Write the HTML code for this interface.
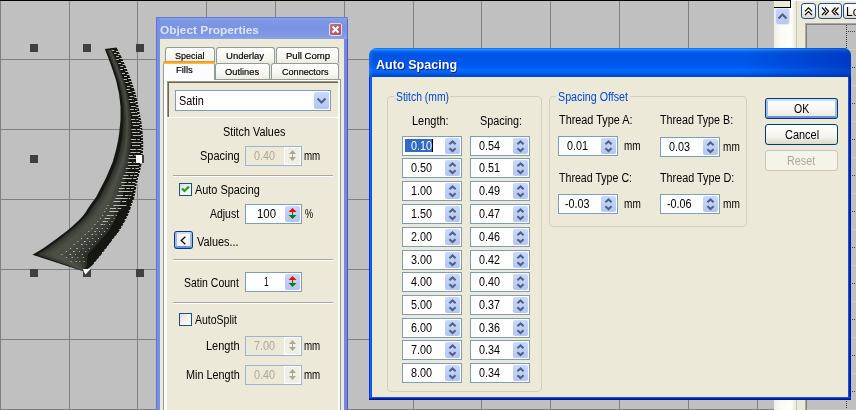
<!DOCTYPE html>
<html><head><meta charset="utf-8"><title>Auto Spacing</title>
<style>
html,body{margin:0;padding:0}
body{width:856px;height:410px;overflow:hidden;position:relative;background:#c0c0c0;font-family:"Liberation Sans",sans-serif;font-size:11px}
.t{position:absolute;white-space:nowrap;transform-origin:0 0}
#canvas,#dock,#panel,#dlg{will-change:transform;position:absolute;left:0;top:0;width:856px;height:410px;overflow:hidden}
</style></head><body>
<div id="canvas">
<div style="position:absolute;left:0px;top:0px;width:1px;height:410px;background:#808080"></div>
<div style="position:absolute;left:69px;top:0px;width:1px;height:410px;background:#808080"></div>
<div style="position:absolute;left:137px;top:0px;width:1px;height:410px;background:#808080"></div>
<div style="position:absolute;left:206px;top:0px;width:1px;height:410px;background:#808080"></div>
<div style="position:absolute;left:275px;top:0px;width:1px;height:410px;background:#808080"></div>
<div style="position:absolute;left:344px;top:0px;width:1px;height:410px;background:#808080"></div>
<div style="position:absolute;left:413px;top:0px;width:1px;height:410px;background:#808080"></div>
<div style="position:absolute;left:481px;top:0px;width:1px;height:410px;background:#808080"></div>
<div style="position:absolute;left:550px;top:0px;width:1px;height:410px;background:#808080"></div>
<div style="position:absolute;left:619px;top:0px;width:1px;height:410px;background:#808080"></div>
<div style="position:absolute;left:688px;top:0px;width:1px;height:410px;background:#808080"></div>
<div style="position:absolute;left:757px;top:0px;width:1px;height:410px;background:#808080"></div>
<div style="position:absolute;left:0px;top:59px;width:774px;height:1px;background:#808080"></div>
<div style="position:absolute;left:0px;top:129px;width:774px;height:1px;background:#808080"></div>
<div style="position:absolute;left:0px;top:199px;width:774px;height:1px;background:#808080"></div>
<div style="position:absolute;left:0px;top:269px;width:774px;height:1px;background:#808080"></div>
<div style="position:absolute;left:0px;top:339px;width:774px;height:1px;background:#808080"></div>
<div style="position:absolute;left:0px;top:409px;width:774px;height:1px;background:#808080"></div>
<div style="position:absolute;left:0px;top:0px;width:791px;height:1px;background:#000"></div>
<svg style="position:absolute;left:0;top:0" width="160" height="290" viewBox="0 0 160 290"><polygon fill="#161713" points="116.5,47.5 117.6,49.5 118.6,51.5 119.7,53.5 120.7,55.5 121.7,57.5 122.6,59.5 123.5,61.5 124.4,63.5 125.3,65.5 126.2,67.5 127.0,69.5 127.8,71.5 128.6,73.5 129.4,75.5 130.2,77.5 131.0,79.5 131.7,81.5 132.3,83.5 133.0,85.5 133.7,87.5 134.3,89.5 135.0,91.5 135.6,93.5 136.1,95.5 136.5,97.5 136.9,99.5 137.4,101.5 137.8,103.5 138.2,105.5 138.6,107.5 139.0,109.5 139.4,111.5 139.8,113.5 140.2,115.5 140.6,117.5 141.0,119.5 141.3,121.5 141.6,123.5 141.8,125.5 142.0,127.5 142.3,129.5 142.5,131.5 142.7,133.5 142.9,135.5 142.9,137.5 143.0,139.5 143.1,141.5 143.2,143.5 143.2,145.5 143.2,147.5 143.1,149.5 143.0,151.5 142.9,153.5 142.7,155.5 142.6,157.5 142.4,159.5 142.0,161.5 141.6,163.5 141.2,165.5 140.8,167.5 140.4,169.5 139.9,171.5 139.3,173.5 138.8,175.5 138.2,177.5 137.6,179.5 137.2,181.5 136.8,183.5 136.5,185.5 136.1,187.5 135.8,189.5 135.5,191.5 135.2,193.5 134.8,195.5 134.4,197.5 133.7,199.5 132.9,201.5 132.2,203.5 131.5,205.5 130.8,207.5 130.2,209.5 129.5,211.5 128.8,213.5 127.9,215.5 126.9,217.5 125.8,219.5 124.8,221.5 123.7,223.5 122.5,225.5 121.4,227.5 120.2,229.5 118.9,231.5 117.3,233.5 115.8,235.5 114.2,237.5 112.6,239.5 111.2,241.5 109.7,243.5 108.2,245.5 106.7,247.5 105.2,249.5 103.6,251.5 102.0,253.5 100.5,255.5 98.9,257.5 97.2,259.5 95.5,261.5 93.9,263.5 92.1,265.5 89.7,267.5 86.9,269.5 84.0,271.5 84,271.5 32.4,254.7 32.4,254.7 35.5,253.0 38.8,251.0 42.1,249.0 45.1,247.0 47.9,245.0 50.7,243.0 53.5,241.0 56.3,239.0 58.9,237.0 61.5,235.0 64.2,233.0 66.8,231.0 69.3,229.0 71.5,227.0 73.7,225.0 75.9,223.0 78.1,221.0 80.1,219.0 81.9,217.0 83.6,215.0 85.1,213.0 86.4,211.0 87.6,209.0 88.9,207.0 90.3,205.0 91.7,203.0 93.2,201.0 94.7,199.0 96.1,197.0 97.2,195.0 98.2,193.0 99.2,191.0 100.3,189.0 101.3,187.0 102.3,185.0 103.4,183.0 104.4,181.0 105.4,179.0 106.3,177.0 107.2,175.0 108.1,173.0 108.9,171.0 109.8,169.0 110.6,167.0 111.4,165.0 112.3,163.0 113.0,161.0 113.5,159.0 114.1,157.0 114.6,155.0 115.2,153.0 115.7,151.0 116.2,149.0 116.7,147.0 117.1,145.0 117.5,143.0 118.0,141.0 118.3,139.0 118.6,137.0 118.9,135.0 119.2,133.0 119.4,131.0 119.6,129.0 119.8,127.0 120.0,125.0 120.2,123.0 120.4,121.0 120.5,119.0 120.5,117.0 120.5,115.0 120.5,113.0 120.5,111.0 120.5,109.0 120.5,107.0 120.3,105.0 120.1,103.0 119.9,101.0 119.6,99.0 119.4,97.0 119.2,95.0 118.9,93.0 118.4,91.0 118.0,89.0 117.5,87.0 117.1,85.0 116.7,83.0 116.2,81.0 115.6,79.0 115.0,77.0 114.3,75.0 113.6,73.0 113.0,71.0 112.3,69.0 111.6,67.0 110.9,65.0 110.2,63.0 109.4,61.0 108.7,59.0 108.0,57.0 107.2,55.0 106.4,53.0 105.6,51.0 104.8,49.0"/><polygon fill="#2e312a" points="107.0,50 107.8,52 108.6,54 109.5,56 110.3,58 111.0,60 111.8,62 112.5,64 113.2,66 113.9,68 114.6,70 115.4,72 116.1,74 116.7,76 117.4,78 118.0,80 118.6,82 119.1,84 119.5,86 120.0,88 120.5,90 121.0,92 121.3,94 121.7,96 121.9,98 122.1,100 122.5,102 122.7,104 122.9,106 123.0,108 123.1,110 123.2,112 123.2,114 123.3,116 123.3,118 123.4,120 123.2,122 123.1,124 123.0,126 122.8,128 122.7,130 122.6,132 122.4,134 122.2,136 121.9,138 121.7,140 121.3,142 120.9,144 120.6,146 120.2,148 119.8,150 119.3,152 118.7,154 118.1,156 117.6,158 117.0,160 116.4,162 115.6,164 114.7,166 113.9,168 113.0,170 112.2,172 111.3,174 110.3,176 109.5,178 108.5,180 107.5,182 106.4,184 105.4,186 104.4,188 103.4,190 102.3,192 101.3,194 100.3,196 99.0,198 97.6,200 96.0,202 94.5,204 93.1,206 91.7,208 90.4,210 89.2,212 87.8,214 86.1,216 84.3,218 82.4,220 80.2,222 78.0,224 75.8,226 73.5,228 71.1,230 68.7,232 66.0,234 63.5,236 61.0,238 58.3,240 55.6,242 52.9,244 50.2,246 47.5,248 44.4,250 41.1,252 37.7,254 40.2,256 45.9,258 51.6,260 57.2,262 62.9,264 68.6,266 74.2,268 79.8,270 84.9,270 85.9,268 86.7,266 87.0,264 87.0,262 87.2,260 87.3,258 87.4,256 88.0,254 90.0,252 91.9,250 93.8,248 95.6,246 97.3,244 99.1,242 100.8,240 102.6,238 104.4,236 106.1,234 107.9,232 109.5,230 110.6,228 111.6,226 112.7,224 113.7,222 114.6,220 115.6,218 116.5,216 117.3,214 117.9,212 118.4,210 118.9,208 119.5,206 120.1,204 120.8,202 121.5,200 122.1,198 122.6,196 122.9,194 123.2,192 123.5,190 123.8,188 124.2,186 124.5,184 124.9,182 125.3,180 125.8,178 126.2,176 126.7,174 127.2,172 127.6,170 128.0,168 128.3,166 128.7,164 129.1,162 129.4,160 129.6,158 129.7,156 129.8,154 130.0,152 130.1,150 130.3,148 130.6,146 130.8,144 131.0,142 131.1,140 131.2,138 131.3,136 131.4,134 131.4,132 131.4,130 131.3,128 131.3,126 131.3,124 131.2,122 131.2,120 131.0,118 130.8,116 130.6,114 130.4,112 130.2,110 130.0,108 129.7,106 129.4,104 129.1,102 128.7,100 128.4,98 128.1,96 127.7,94 127.3,92 126.7,90 126.1,88 125.5,86 125.0,84 124.4,82 123.8,80 123.2,78 122.4,76 121.7,74 120.9,72 120.2,70 119.4,68 118.7,66 117.9,64 117.1,62 116.2,60 115.4,58 114.5,56 113.6,54 112.7,52 111.8,50"/><polygon fill="#393c35" points="107.7,50 108.6,52 109.4,54 110.3,56 111.1,58 111.8,60 112.6,62 113.3,64 114.1,66 114.8,68 115.5,70 116.2,72 117.0,74 117.6,76 118.3,78 119.0,80 119.5,82 120.0,84 120.5,86 121.0,88 121.5,90 122.0,92 122.3,94 122.7,96 122.9,98 123.2,100 123.5,102 123.7,104 124.0,106 124.1,108 124.2,110 124.3,112 124.4,114 124.5,116 124.5,118 124.6,120 124.5,122 124.4,124 124.3,126 124.2,128 124.1,130 124.0,132 123.8,134 123.6,136 123.4,138 123.2,140 122.9,142 122.5,144 122.2,146 121.8,148 121.4,150 120.9,152 120.4,154 119.8,156 119.3,158 118.7,160 118.0,162 117.3,164 116.4,166 115.6,168 114.7,170 113.9,172 113.0,174 112.1,176 111.2,178 110.2,180 109.2,182 108.1,184 107.2,186 106.2,188 105.2,190 104.1,192 103.1,194 102.1,196 100.8,198 99.4,200 97.9,202 96.4,204 95.0,206 93.6,208 92.4,210 91.1,212 89.7,214 88.1,216 86.2,218 84.3,220 82.2,222 80.0,224 77.8,226 75.6,228 73.2,230 70.8,232 68.2,234 65.7,236 63.2,238 60.6,240 58.0,242 55.3,244 52.6,246 50.0,248 46.9,250 43.7,252 40.4,254 42.8,256 48.1,258 53.5,260 58.8,262 64.2,264 69.6,266 74.8,268 80.1,270 84.3,270 84.6,268 84.7,266 84.4,264 83.8,262 83.3,260 82.8,258 82.3,256 82.6,254 84.7,252 86.8,250 88.8,248 90.7,246 92.5,244 94.4,242 96.2,240 98.1,238 99.9,236 101.8,234 103.7,232 105.3,230 106.6,228 107.7,226 108.8,224 110.0,222 111.0,220 112.1,218 113.1,216 113.9,214 114.6,212 115.2,210 115.7,208 116.4,206 117.1,204 117.8,202 118.6,200 119.3,198 119.9,196 120.3,194 120.6,192 121.0,190 121.4,188 121.8,186 122.1,184 122.6,182 123.1,180 123.6,178 124.1,176 124.6,174 125.1,172 125.5,170 126.0,168 126.4,166 126.9,164 127.2,162 127.5,160 127.8,158 127.9,156 128.1,154 128.3,152 128.5,150 128.7,148 129.0,146 129.2,144 129.4,142 129.6,140 129.7,138 129.9,136 130.0,134 130.0,132 130.0,130 130.0,128 130.0,126 130.0,124 130.0,122 130.0,120 129.8,118 129.6,116 129.4,114 129.2,112 129.1,110 128.9,108 128.6,106 128.3,104 128.1,102 127.7,100 127.4,98 127.1,96 126.7,94 126.3,92 125.7,90 125.2,88 124.6,86 124.1,84 123.5,82 122.9,80 122.2,78 121.5,76 120.8,74 120.1,72 119.3,70 118.6,68 117.8,66 117.0,64 116.2,62 115.4,60 114.6,58 113.7,56 112.8,54 111.9,52 111.0,50"/><polygon fill="#43473e" points="108.6,50 109.5,52 110.4,54 111.2,56 112.1,58 112.8,60 113.6,62 114.3,64 115.1,66 115.8,68 116.5,70 117.3,72 118.0,74 118.7,76 119.4,78 120.0,80 120.6,82 121.1,84 121.6,86 122.1,88 122.6,90 123.1,92 123.5,94 123.9,96 124.1,98 124.4,100 124.7,102 125.0,104 125.2,106 125.4,108 125.5,110 125.6,112 125.7,114 125.8,116 126.0,118 126.1,120 126.0,122 125.9,124 125.8,126 125.7,128 125.7,130 125.6,132 125.5,134 125.3,136 125.1,138 124.9,140 124.6,142 124.3,144 124.0,146 123.6,148 123.3,150 122.8,152 122.3,154 121.7,156 121.2,158 120.7,160 120.0,162 119.3,164 118.5,166 117.7,168 116.8,170 116.0,172 115.1,174 114.2,176 113.3,178 112.4,180 111.4,182 110.4,184 109.4,186 108.5,188 107.5,190 106.5,192 105.5,194 104.6,196 103.3,198 101.9,200 100.5,202 99.0,204 97.6,206 96.3,208 95.1,210 93.8,212 92.4,214 90.8,216 89.0,218 87.2,220 85.1,222 83.0,224 80.8,226 78.7,228 76.3,230 74.0,232 71.5,234 69.0,236 66.6,238 64.1,240 61.5,242 58.9,244 56.3,246 53.7,248 50.8,250 47.7,252 44.5,254 46.6,256 51.5,258 56.4,260 61.3,262 66.2,264 71.0,266 75.8,268 80.5,270 83.5,270 82.7,268 81.8,266 80.5,264 79.0,262 77.6,260 76.1,258 74.6,256 74.4,254 76.8,252 79.1,250 81.3,248 83.3,246 85.3,244 87.3,242 89.3,240 91.3,238 93.3,236 95.3,234 97.3,232 99.1,230 100.6,228 101.9,226 103.2,224 104.5,222 105.8,220 107.0,218 108.1,216 109.2,214 110.0,212 110.7,210 111.3,208 112.1,206 113.0,204 113.8,202 114.7,200 115.6,198 116.3,196 116.8,194 117.2,192 117.8,190 118.2,188 118.8,186 119.2,184 119.8,182 120.4,180 121.0,178 121.6,176 122.1,174 122.7,172 123.2,170 123.8,168 124.2,166 124.8,164 125.2,162 125.6,160 125.9,158 126.1,156 126.4,154 126.6,152 126.8,150 127.1,148 127.4,146 127.7,144 127.9,142 128.1,140 128.3,138 128.4,136 128.6,134 128.6,132 128.6,130 128.6,128 128.7,126 128.7,124 128.7,122 128.7,120 128.6,118 128.4,116 128.3,114 128.1,112 127.9,110 127.8,108 127.6,106 127.3,104 127.0,102 126.6,100 126.3,98 126.1,96 125.7,94 125.3,92 124.7,90 124.2,88 123.6,86 123.1,84 122.6,82 122.0,80 121.3,78 120.6,76 119.9,74 119.2,72 118.4,70 117.7,68 116.9,66 116.2,64 115.4,62 114.6,60 113.8,58 112.9,56 112.1,54 111.1,52 110.3,50"/><polygon fill="#4b4f45" points="109.1,50 110.0,52 110.9,54 111.7,56 112.6,58 113.4,60 114.1,62 114.9,64 115.6,66 116.4,68 117.1,70 117.9,72 118.6,74 119.2,76 120.0,78 120.6,80 121.2,82 121.7,84 122.2,86 122.8,88 123.3,90 123.8,92 124.2,94 124.5,96 124.8,98 125.1,100 125.4,102 125.7,104 125.9,106 126.1,108 126.3,110 126.4,112 126.5,114 126.6,116 126.8,118 126.9,120 126.8,122 126.8,124 126.7,126 126.6,128 126.6,130 126.5,132 126.4,134 126.3,136 126.1,138 125.9,140 125.6,142 125.3,144 125.1,146 124.7,148 124.4,150 124.0,152 123.5,154 123.0,156 122.5,158 122.0,160 121.4,162 120.7,164 119.9,166 119.2,168 118.4,170 117.6,172 116.7,174 115.9,176 115.1,178 114.2,180 113.3,182 112.3,184 111.4,186 110.6,188 109.7,190 108.7,192 107.9,194 107.0,196 105.8,198 104.5,200 103.1,202 101.8,204 100.5,206 99.2,208 98.1,210 96.9,212 95.6,214 94.1,216 92.4,218 90.7,220 88.7,222 86.7,224 84.7,226 82.7,228 80.4,230 78.2,232 75.8,234 73.4,236 71.1,238 68.7,240 66.2,242 63.7,244 61.2,246 58.7,248 55.9,250 53.0,252 49.9,254 51.7,256 56.0,258 60.2,260 64.5,262 68.8,264 73.0,266 77.0,268 81.0,270 82.5,270 80.5,268 78.4,266 75.9,264 73.3,262 70.8,260 68.3,258 65.7,256 64.9,254 67.5,252 70.1,250 72.5,248 74.7,246 76.9,244 79.1,242 81.3,240 83.5,238 85.6,236 87.7,234 89.9,232 91.9,230 93.6,228 95.2,226 96.8,224 98.4,222 99.9,220 101.3,218 102.6,216 103.8,214 104.9,212 105.7,210 106.6,208 107.5,206 108.5,204 109.6,202 110.7,200 111.7,198 112.6,196 113.2,194 113.8,192 114.5,190 115.2,188 115.8,186 116.4,184 117.2,182 117.9,180 118.6,178 119.2,176 119.9,174 120.6,172 121.2,170 121.9,168 122.4,166 123.1,164 123.6,162 124.0,160 124.4,158 124.7,156 125.1,154 125.5,152 125.8,150 126.0,148 126.4,146 126.6,144 126.9,142 127.1,140 127.3,138 127.5,136 127.6,134 127.7,132 127.7,130 127.7,128 127.8,126 127.9,124 127.9,122 127.9,120 127.8,118 127.6,116 127.5,114 127.3,112 127.2,110 127.1,108 126.8,106 126.6,104 126.3,102 125.9,100 125.7,98 125.4,96 125.0,94 124.6,92 124.1,90 123.6,88 123.0,86 122.5,84 122.0,82 121.4,80 120.7,78 120.0,76 119.3,74 118.6,72 117.9,70 117.1,68 116.4,66 115.6,64 114.8,62 114.0,60 113.3,58 112.4,56 111.5,54 110.6,52 109.8,50"/><path d="M116.0 51.5h3M117.8 54.5h3M119.5 58.5h3M121.0 61.5h3M122.5 64.5h3M124.0 68.5h3M125.3 71.5h3M126.6 74.5h3M128.0 78.5h3M129.3 81.5h3M130.3 84.5h3M131.4 87.5h3M132.5 91.5h3M133.6 94.5h3M134.4 97.5h3M135.1 101.5h3M135.9 104.5h3M136.5 107.5h3M137.2 111.5h3M137.8 114.5h3M138.5 117.5h3M139.2 120.5h3M139.6 124.5h3M140.0 127.5h3M140.4 130.5h3M140.8 134.5h3M141.1 137.5h3M141.2 140.5h3M141.3 144.5h3M141.4 147.5h3M141.3 150.5h3M141.1 153.5h3M140.9 157.5h3M140.7 160.5h3M140.1 163.5h3M139.4 167.5h3M138.7 170.5h3M137.9 173.5h3M137.0 177.5h3M136.0 180.5h3M135.3 183.5h3M134.7 186.5h3M134.2 190.5h3M133.6 193.5h3M133.1 196.5h3M132.2 200.5h3M131.0 203.5h3M129.9 206.5h3M128.7 210.5h3M127.6 213.5h3M126.3 216.5h3M124.6 219.5h3M122.9 223.5h3M121.1 226.5h3M119.2 229.5h3M117.1 233.5h3M114.5 236.5h3M111.9 239.5h3M109.5 243.5h3M107.0 246.5h3M104.5 249.5h3M102.0 252.5h3M99.3 256.5h3M96.8 259.5h3M94.0 262.5h3M91.2 266.5h3M87.5 269.5h3" stroke="#c0c0c0" stroke-width="1" fill="none"/><path d="M111.8 50.5h2.5M114.0 53.5h2.6M116.2 56.5h2.7M116.2 59.5h2.7M118.3 63.5h2.8M120.3 66.5h2.9M120.1 69.5h2.9M122.0 73.5h3.0M124.0 76.5h3.0M123.7 79.5h3.1M125.4 82.5h3.1M127.0 86.5h3.2M126.6 89.5h3.2M128.2 92.5h3.3M129.5 96.5h3.4M132.7 96.5h0.6M133.9 96.5h0.5M128.6 99.5h3.5M133.3 99.5h0.7M129.9 102.5h3.5M133.9 102.5h0.9M135.2 102.5h0.7M131.1 106.5h3.6M134.5 106.5h1.1M130.1 109.5h3.7M135.0 109.5h1.3M136.4 109.5h1.0M131.2 112.5h3.8M135.5 112.5h1.5M132.2 115.5h4.0M136.0 115.5h1.8M137.5 115.5h1.4M131.1 119.5h4.1M136.4 119.5h2.0M132.0 122.5h4.2M136.7 122.5h2.1M138.5 122.5h1.7M132.7 125.5h4.4M136.9 125.5h2.2M131.4 129.5h4.5M137.1 129.5h2.3M139.1 129.5h1.8M132.1 132.5h4.7M137.3 132.5h2.3M132.7 135.5h4.8M137.4 135.5h2.4M139.5 135.5h1.9M131.1 139.5h4.9M137.3 139.5h2.5M131.6 142.5h5.2M137.3 142.5h2.5M139.5 142.5h2.0M132.0 145.5h5.6M137.4 145.5h2.6M130.2 149.5h6.0M137.4 149.5h2.7M139.4 149.5h2.2M130.4 152.5h6.3M137.3 152.5h2.8M129.1 155.5h3.7M134.3 155.5h1.5M137.1 155.5h2.8M138.7 155.5h2.3M128.6 158.5h7.2M136.9 158.5h2.9M127.8 162.5h4.1M133.4 162.5h1.9M136.5 162.5h2.9M137.8 162.5h2.3M128.2 165.5h7.9M135.9 165.5h3.0M125.8 168.5h4.6M131.9 168.5h2.3M135.4 168.5h3.1M136.2 168.5h2.5M125.4 172.5h8.8M134.7 172.5h3.1M123.5 175.5h5.0M130.1 175.5h2.6M133.9 175.5h3.2M134.4 175.5h2.5M122.3 178.5h9.6M133.1 178.5h3.2M121.2 182.5h5.5M128.2 182.5h3.0M132.4 182.5h3.1M132.5 182.5h2.5M121.4 185.5h10.5M131.7 185.5h2.8M118.9 188.5h6.0M126.4 188.5h3.4M131.0 188.5h2.5M131.0 188.5h2.0M118.5 191.5h11.4M130.4 191.5h2.1M116.7 195.5h6.5M124.7 195.5h3.8M129.7 195.5h1.8M129.6 195.5h1.4M115.3 198.5h12.3M128.8 198.5h1.4M113.5 201.5h7.0M122.0 201.5h4.2M113.2 205.5h13.2M115.9 205.5h1M120.1 205.5h1M107.6 205.5h1M110.1 208.5h6.1M117.7 208.5h3.5M114.4 208.5h1M118.6 208.5h1M105.8 208.5h1M109.3 211.5h8.9M112.9 211.5h1M117.3 211.5h1M104.2 211.5h1M106.8 215.5h3.8M112.1 215.5h1.6M111.2 215.5h1M115.7 215.5h1M102.3 215.5h1M104.5 218.5h4.9M109.1 218.5h1M113.6 218.5h1M99.9 218.5h1M102.7 221.5h3.8M106.8 221.5h1M111.5 221.5h1M97.3 221.5h1M100.7 224.5h2.7M104.2 224.5h1M109.1 224.5h1M94.4 224.5h1M96.6 228.5h1.5M101.7 228.5h1M106.8 228.5h1M91.5 228.5h1M94.3 231.5h1.5M98.9 231.5h1M104.1 231.5h1M88.3 231.5h1M91.5 234.5h1.5M95.6 234.5h1M101.0 234.5h1M84.7 234.5h1M86.7 238.5h1.6M92.3 238.5h1M98.0 238.5h1M81.1 238.5h1M84.0 241.5h1.6M89.1 241.5h1M94.9 241.5h1M77.4 241.5h1M81.1 244.5h1.6M85.8 244.5h1M91.8 244.5h1M73.7 244.5h1M76.3 248.5h1.6M82.5 248.5h1M88.8 248.5h1M70.0 248.5h1M73.0 251.5h1.6M78.9 251.5h1M85.4 251.5h1M65.8 251.5h1M69.6 254.5h1.6M75.1 254.5h1M81.9 254.5h1M61.4 254.5h1M71.5 257.5h1.3M77.2 257.5h1M82.8 257.5h1M65.9 257.5h1M75.6 261.5h1.0M79.3 261.5h1M83.6 261.5h1M70.6 261.5h1" stroke="#bdbdb8" stroke-width="1" fill="none"/></svg>
<div style="position:absolute;left:30px;top:44px;width:8px;height:8px;background:#404040"></div>
<div style="position:absolute;left:83px;top:44px;width:8px;height:8px;background:#404040"></div>
<div style="position:absolute;left:136px;top:44px;width:8px;height:8px;background:#404040"></div>
<div style="position:absolute;left:30px;top:155px;width:8px;height:8px;background:#404040"></div>
<div style="position:absolute;left:30px;top:269px;width:8px;height:8px;background:#404040"></div>
<div style="position:absolute;left:136px;top:269px;width:8px;height:8px;background:#404040"></div>
<div style="position:absolute;left:136px;top:155px;width:8px;height:8px;background:#404040"></div>
<div style="position:absolute;left:83px;top:269px;width:8px;height:8px;background:#404040"></div>
<div style="position:absolute;left:136px;top:155px;width:6px;height:8px;background:#fff"></div>
<svg style="position:absolute;left:83px;top:269px" width="8" height="8" viewBox="0 0 8 8"><path d="M0 0H7.5L2.5 5.5L1 3Z" fill="#fff"/></svg>
</div>
<div id="dock">
<div style="position:absolute;left:774px;top:1px;width:17px;height:409px;background:linear-gradient(90deg,#efeee6,#fbfaf6 40%,#fefefb)"></div>
<div style="position:absolute;left:774px;top:1px;width:16px;height:6px;background:#ece9d8;border-right:1px solid #000;border-bottom:1px solid #000"></div>
<div style="position:absolute;left:776px;top:9px;width:13px;height:15px;background:linear-gradient(#c6d6fb,#b6c8f2);border-radius:2px;box-shadow:0 0 0 1px #e3eafb"><svg width="13" height="15" viewBox="0 0 13 15" style="position:absolute;left:0;top:0"><path d="M2.5 9.5L6.5 5.5L10.5 9.5" fill="none" stroke="#4d6185" stroke-width="2"/></svg></div>
<div style="position:absolute;left:791px;top:0px;width:65px;height:410px;background:#ece9d8"></div>
<div style="position:absolute;left:791px;top:1px;width:5px;height:409px;background:linear-gradient(90deg,#fff,#f4f3ea 40%,#ece9d8)"></div>
<div style="position:absolute;left:796px;top:1px;width:1px;height:409px;background:#c8c5b2"></div>
<div style="position:absolute;left:791px;top:0px;width:65px;height:1px;background:#fff"></div>
<div style="position:absolute;left:806px;top:24px;width:50px;height:386px;background:#c0c0c0;border-left:1px solid #808080;border-top:1px solid #808080;box-sizing:border-box"></div>
<div style="position:absolute;left:805px;top:23px;width:51px;height:1px;background:#aca899"></div>
<div style="position:absolute;left:805px;top:23px;width:1px;height:387px;background:#aca899"></div>
<div style="position:absolute;left:846px;top:25px;width:1px;height:385px;background:repeating-linear-gradient(#404040 0 1px,transparent 1px 2px)"></div>
<div style="position:absolute;left:846px;top:31px;width:10px;height:1px;background:repeating-linear-gradient(90deg,#404040 0 1px,transparent 1px 2px)"></div>
<div style="position:absolute;left:846px;top:67px;width:10px;height:1px;background:repeating-linear-gradient(90deg,#404040 0 1px,transparent 1px 2px)"></div>
<div style="position:absolute;left:846px;top:103px;width:10px;height:1px;background:repeating-linear-gradient(90deg,#404040 0 1px,transparent 1px 2px)"></div>
<div style="position:absolute;left:846px;top:139px;width:10px;height:1px;background:repeating-linear-gradient(90deg,#404040 0 1px,transparent 1px 2px)"></div>
<div style="position:absolute;left:846px;top:175px;width:10px;height:1px;background:repeating-linear-gradient(90deg,#404040 0 1px,transparent 1px 2px)"></div>
<div style="position:absolute;left:846px;top:211px;width:10px;height:1px;background:repeating-linear-gradient(90deg,#404040 0 1px,transparent 1px 2px)"></div>
<div style="position:absolute;left:846px;top:247px;width:10px;height:1px;background:repeating-linear-gradient(90deg,#404040 0 1px,transparent 1px 2px)"></div>
<div style="position:absolute;left:846px;top:283px;width:10px;height:1px;background:repeating-linear-gradient(90deg,#404040 0 1px,transparent 1px 2px)"></div>
<div style="position:absolute;left:846px;top:319px;width:10px;height:1px;background:repeating-linear-gradient(90deg,#404040 0 1px,transparent 1px 2px)"></div>
<div style="position:absolute;left:846px;top:355px;width:10px;height:1px;background:repeating-linear-gradient(90deg,#404040 0 1px,transparent 1px 2px)"></div>
<div style="position:absolute;left:846px;top:391px;width:10px;height:1px;background:repeating-linear-gradient(90deg,#404040 0 1px,transparent 1px 2px)"></div>
<div style="position:absolute;left:807px;top:49px;width:49px;height:1px;background:#cccccc"></div>
<div style="position:absolute;left:807px;top:85px;width:49px;height:1px;background:#cccccc"></div>
<div style="position:absolute;left:807px;top:121px;width:49px;height:1px;background:#cccccc"></div>
<div style="position:absolute;left:807px;top:157px;width:49px;height:1px;background:#cccccc"></div>
<div style="position:absolute;left:807px;top:193px;width:49px;height:1px;background:#cccccc"></div>
<div style="position:absolute;left:807px;top:229px;width:49px;height:1px;background:#cccccc"></div>
<div style="position:absolute;left:807px;top:265px;width:49px;height:1px;background:#cccccc"></div>
<div style="position:absolute;left:807px;top:301px;width:49px;height:1px;background:#cccccc"></div>
<div style="position:absolute;left:807px;top:337px;width:49px;height:1px;background:#cccccc"></div>
<div style="position:absolute;left:807px;top:373px;width:49px;height:1px;background:#cccccc"></div>
<div style="position:absolute;left:807px;top:409px;width:49px;height:1px;background:#cccccc"></div>
<div style="position:absolute;left:801px;top:3px;width:15px;height:16px;background:linear-gradient(#fff,#f3f2ea 60%,#dcd9c9);border:1px solid #1f4f8a;border-radius:3px;box-sizing:border-box;"><svg width="13" height="14" viewBox="0 0 13 14" style="position:absolute;left:0;top:0"><path d="M3 7.3L6.5 3.8L10 7.3M3 11L6.5 7.5L10 11" fill="none" stroke="#000" stroke-width="1.1"/></svg></div>
<div style="position:absolute;left:818px;top:3px;width:24px;height:16px;background:linear-gradient(#fff,#f3f2ea 60%,#dcd9c9);border:1px solid #1f4f8a;border-radius:3px;box-sizing:border-box;"><svg width="22" height="14" viewBox="0 0 22 14" style="position:absolute;left:0;top:0"><path d="M3 3.5L6.5 7.25L3 11M6 3.5L9.5 7.25L6 11M16.5 3.5L13 7.25L16.5 11M19.5 3.5L16 7.25L19.5 11" fill="none" stroke="#000" stroke-width="1.1"/></svg></div>
<div style="position:absolute;left:843px;top:3px;width:20px;height:16px;background:linear-gradient(#fff,#f3f2ea 60%,#dcd9c9);border:1px solid #1f4f8a;border-radius:3px;box-sizing:border-box;"></div>
<span class="t" style="left:846.05px;top:5px;font-size:12px;line-height:14px;color:#000;">Lo</span>
</div>
<div id="panel">
<div style="position:absolute;left:156px;top:17px;width:192px;height:393px;background:#ece9d8"></div>
<div style="position:absolute;left:156px;top:17px;width:192px;height:22px;background:linear-gradient(#667be0 0 1px,#8aa3ea 1px,#7e98e4 18%,#7993e0 55%,#7f9ae5 82%,#89a4ea)"></div>
<div style="position:absolute;left:156px;top:18px;width:4px;height:392px;background:linear-gradient(90deg,#6273d8 0 1px,#7a8fe4 1px)"></div>
<div style="position:absolute;left:344px;top:39px;width:4px;height:371px;background:linear-gradient(90deg,#7688e0 0 3px,#4d54c4 3px)"></div>
<div style="position:absolute;left:347px;top:19px;width:1px;height:20px;background:#5b66cf"></div>
<span class="t" style="left:159.51px;top:24px;font-size:11px;line-height:12px;color:#dbe5f9;transform:scaleX(1.079);font-weight:bold;">Object Properties</span>
<div style="position:absolute;left:329px;top:23px;width:13px;height:13px;background:linear-gradient(135deg,#c07480,#a8505e);border:1px solid #e4dcef;border-radius:2px;box-sizing:border-box"><svg width="11" height="11" viewBox="0 0 11 11" style="position:absolute;left:0;top:0"><path d="M2.5 2.5L8.5 8.5M8.5 2.5L2.5 8.5" stroke="#fff" stroke-width="2" fill="none"/></svg></div>
<div style="position:absolute;left:163px;top:79px;width:178px;height:331px;background:#fcfcfe;border:1px solid #919b9c;border-bottom:none;box-sizing:border-box"></div>
<div style="position:absolute;left:167px;top:81px;width:171px;height:329px;background:#ece9d8"></div>
<div style="position:absolute;left:167px;top:81px;width:171px;height:36px;border-top:1px solid #9a9782;border-left:1px solid #9a9782;box-sizing:border-box"></div>
<div style="position:absolute;left:168px;top:82px;width:170px;height:35px;border-top:1px solid #6a6757;border-left:1px solid #6a6757;box-sizing:border-box"></div>
<div style="position:absolute;left:167px;top:117px;width:172px;height:1px;background:#fff"></div>
<div style="position:absolute;left:165px;top:47px;width:50px;height:16px;background:linear-gradient(#fff,#f6f5ee 70%,#ecebe0);border:1px solid #919b9c;border-bottom:none;border-radius:3px 3px 0 0;box-sizing:border-box;"></div>
<div style="position:absolute;left:216px;top:47px;width:59px;height:16px;background:linear-gradient(#fff,#f6f5ee 70%,#ecebe0);border:1px solid #919b9c;border-bottom:none;border-radius:3px 3px 0 0;box-sizing:border-box;"></div>
<div style="position:absolute;left:276px;top:47px;width:63px;height:16px;background:linear-gradient(#fff,#f6f5ee 70%,#ecebe0);border:1px solid #919b9c;border-bottom:none;border-radius:3px 3px 0 0;box-sizing:border-box;"></div>
<div style="position:absolute;left:215px;top:63px;width:55px;height:16px;background:linear-gradient(#fff,#f6f5ee 70%,#ecebe0);border:1px solid #919b9c;border-bottom:none;border-radius:3px 3px 0 0;box-sizing:border-box;"></div>
<div style="position:absolute;left:271px;top:63px;width:68px;height:16px;background:linear-gradient(#fff,#f6f5ee 70%,#ecebe0);border:1px solid #919b9c;border-bottom:none;border-radius:3px 3px 0 0;box-sizing:border-box;"></div>
<div style="position:absolute;left:163px;top:61px;width:52px;height:19px;background:#fcfcfe;border:1px solid #919b9c;border-bottom:none;border-radius:3px 3px 0 0;box-sizing:border-box;"></div>
<div style="position:absolute;left:163px;top:61px;width:52px;height:3px;background:linear-gradient(#e68b2c,#ffc73c);border-radius:3px 3px 0 0"></div>
<span class="t" style="left:175.37px;top:50px;font-size:9.5px;line-height:11px;color:#000;transform:scaleX(0.944);-webkit-text-stroke:.18px #000;">Special</span>
<span class="t" style="left:226.10px;top:50px;font-size:9.5px;line-height:11px;color:#000;transform:scaleX(1.000);-webkit-text-stroke:.18px #000;">Underlay</span>
<span class="t" style="left:285.75px;top:50px;font-size:9.5px;line-height:11px;color:#000;transform:scaleX(1.005);-webkit-text-stroke:.18px #000;">Pull Comp</span>
<span class="t" style="left:176.06px;top:64px;font-size:9.5px;line-height:11px;color:#000;transform:scaleX(0.991);-webkit-text-stroke:.18px #000;">Fills</span>
<span class="t" style="left:224.56px;top:66px;font-size:9.5px;line-height:11px;color:#000;transform:scaleX(0.977);-webkit-text-stroke:.18px #000;">Outlines</span>
<span class="t" style="left:282.32px;top:66px;font-size:9.5px;line-height:11px;color:#000;transform:scaleX(0.956);-webkit-text-stroke:.18px #000;">Connectors</span>
<div style="position:absolute;left:175px;top:90px;width:156px;height:21px;background:#fff;border:1px solid #7f9db9;box-sizing:border-box"></div>
<div style="position:absolute;left:314px;top:92px;width:15px;height:17px;background:linear-gradient(#c9d8fc,#b4c6f0);border-radius:2px"><svg width="15" height="17" viewBox="0 0 15 17" style="position:absolute;left:0;top:0"><path d="M3.5 6.5L7.5 10.5L11.5 6.5" fill="none" stroke="#4d6185" stroke-width="2"/></svg></div>
<span class="t" style="left:178.95px;top:94px;font-size:12px;line-height:14px;color:#000;transform:scaleX(0.904);">Satin</span>
<span class="t" style="left:223.05px;top:125px;font-size:12px;line-height:14px;color:#000;transform:scaleX(0.901);">Stitch Values</span>
<span class="t" style="left:200.14px;top:149px;font-size:12px;line-height:14px;color:#000;transform:scaleX(0.912);">Spacing</span>
<span class="t" style="left:304.39px;top:149px;font-size:12px;line-height:14px;color:#000;transform:scaleX(0.811);">mm</span>
<span class="t" style="left:195.00px;top:183px;font-size:12px;line-height:14px;color:#000;transform:scaleX(0.907);">Auto Spacing</span>
<span class="t" style="left:210.00px;top:207px;font-size:12px;line-height:14px;color:#000;transform:scaleX(0.872);">Adjust</span>
<span class="t" style="left:304.70px;top:207px;font-size:12px;line-height:14px;color:#000;transform:scaleX(0.761);">%</span>
<span class="t" style="left:196.85px;top:235px;font-size:12px;line-height:14px;color:#000;transform:scaleX(0.909);">Values...</span>
<span class="t" style="left:184.16px;top:276px;font-size:12px;line-height:14px;color:#000;transform:scaleX(0.875);">Satin Count</span>
<span class="t" style="left:195.00px;top:313px;font-size:12px;line-height:14px;color:#000;transform:scaleX(0.874);">AutoSplit</span>
<span class="t" style="left:206.03px;top:339px;font-size:12px;line-height:14px;color:#000;transform:scaleX(0.917);">Length</span>
<span class="t" style="left:304.39px;top:339px;font-size:12px;line-height:14px;color:#000;transform:scaleX(0.811);">mm</span>
<span class="t" style="left:186.04px;top:368px;font-size:12px;line-height:14px;color:#000;transform:scaleX(0.904);">Min Length</span>
<span class="t" style="left:304.39px;top:368px;font-size:12px;line-height:14px;color:#000;transform:scaleX(0.811);">mm</span>
<div style="position:absolute;left:245px;top:146px;width:57px;height:20px;background:#ece9d8;border:1px solid #9db4cf;box-sizing:border-box"></div>
<div style="position:absolute;left:284px;top:147px;width:17px;height:18px;background:#fff"></div>
<div style="position:absolute;left:285px;top:148px;width:15px;height:16px;background:#f1efe3;border-radius:2px"><svg width="15" height="16" viewBox="0 0 15 16" style="position:absolute;left:0;top:0"><path d="M7.5 2L11 6H4Z" fill="#aca899"/><path d="M7.5 13L11 9H4Z" fill="#aca899"/><path d="M7.5 5V10" stroke="#aca899" stroke-width="1"/></svg></div>
<span class="t" style="left:253.89px;top:149px;font-size:12px;line-height:14px;color:#aca899;transform:scaleX(0.900);">0.40</span>
<div style="position:absolute;left:245px;top:204px;width:57px;height:20px;background:#fff;border:1px solid #7f9db9;box-sizing:border-box"></div>
<div style="position:absolute;left:285px;top:206px;width:15px;height:16px;background:linear-gradient(#c9d8fc,#b4c6f0);border-radius:2px"><svg width="15" height="16" viewBox="0 0 15 16" style="position:absolute;left:0;top:0"><path d="M7.5 2L11.5 6H3.5Z" fill="#f00"/><path d="M7.5 13L11.5 9H3.5Z" fill="#008000"/><path d="M7.5 6V9" stroke="#7a4a10" stroke-width="1"/></svg></div>
<span class="t" style="left:256.65px;top:207px;font-size:12px;line-height:14px;color:#000;transform:scaleX(0.949);">100</span>
<div style="position:absolute;left:245px;top:272px;width:57px;height:20px;background:#fff;border:1px solid #7f9db9;box-sizing:border-box"></div>
<div style="position:absolute;left:285px;top:274px;width:15px;height:16px;background:linear-gradient(#c9d8fc,#b4c6f0);border-radius:2px"><svg width="15" height="16" viewBox="0 0 15 16" style="position:absolute;left:0;top:0"><path d="M7.5 2L11.5 6H3.5Z" fill="#f00"/><path d="M7.5 13L11.5 9H3.5Z" fill="#008000"/><path d="M7.5 6V9" stroke="#7a4a10" stroke-width="1"/></svg></div>
<span class="t" style="left:263.58px;top:275px;font-size:12px;line-height:14px;color:#000;transform:scaleX(0.692);">1</span>
<div style="position:absolute;left:245px;top:336px;width:57px;height:20px;background:#ece9d8;border:1px solid #9db4cf;box-sizing:border-box"></div>
<div style="position:absolute;left:284px;top:337px;width:17px;height:18px;background:#fff"></div>
<div style="position:absolute;left:285px;top:338px;width:15px;height:16px;background:#f1efe3;border-radius:2px"><svg width="15" height="16" viewBox="0 0 15 16" style="position:absolute;left:0;top:0"><path d="M7.5 2L11 6H4Z" fill="#aca899"/><path d="M7.5 13L11 9H4Z" fill="#aca899"/><path d="M7.5 5V10" stroke="#aca899" stroke-width="1"/></svg></div>
<span class="t" style="left:253.89px;top:339px;font-size:12px;line-height:14px;color:#aca899;transform:scaleX(0.900);">7.00</span>
<div style="position:absolute;left:245px;top:365px;width:57px;height:20px;background:#ece9d8;border:1px solid #9db4cf;box-sizing:border-box"></div>
<div style="position:absolute;left:284px;top:366px;width:17px;height:18px;background:#fff"></div>
<div style="position:absolute;left:285px;top:367px;width:15px;height:16px;background:#f1efe3;border-radius:2px"><svg width="15" height="16" viewBox="0 0 15 16" style="position:absolute;left:0;top:0"><path d="M7.5 2L11 6H4Z" fill="#aca899"/><path d="M7.5 13L11 9H4Z" fill="#aca899"/><path d="M7.5 5V10" stroke="#aca899" stroke-width="1"/></svg></div>
<span class="t" style="left:253.89px;top:368px;font-size:12px;line-height:14px;color:#aca899;transform:scaleX(0.900);">0.40</span>
<div style="position:absolute;left:173px;top:175px;width:160px;height:1px;background:#aca899"></div>
<div style="position:absolute;left:173px;top:176px;width:160px;height:1px;background:#fff"></div>
<div style="position:absolute;left:173px;top:259px;width:160px;height:1px;background:#aca899"></div>
<div style="position:absolute;left:173px;top:260px;width:160px;height:1px;background:#fff"></div>
<div style="position:absolute;left:173px;top:302px;width:160px;height:1px;background:#aca899"></div>
<div style="position:absolute;left:173px;top:303px;width:160px;height:1px;background:#fff"></div>
<div style="position:absolute;left:179px;top:183px;width:13px;height:13px;background:linear-gradient(135deg,#dcdcd7,#f3f3ef 50%,#fff);border:1px solid #1c5180;box-sizing:border-box"><svg width="11" height="11" viewBox="0 0 11 11" style="position:absolute;left:0;top:0"><path d="M2 4.5L4.5 7L9 2.5" fill="none" stroke="#21a121" stroke-width="2.2"/></svg></div>
<div style="position:absolute;left:179px;top:313px;width:13px;height:13px;background:linear-gradient(135deg,#dcdcd7,#f3f3ef 50%,#fff);border:1px solid #1c5180;box-sizing:border-box"></div>
<div style="position:absolute;left:174px;top:231px;width:19px;height:18px;background:#003c74;border-radius:3px"></div>
<div style="position:absolute;left:175px;top:232px;width:17px;height:16px;background:linear-gradient(#f8f8f6,#f1f0ea);border:2px solid;border-color:#cbdcfb #9cb8f0 #6a8fe4 #9cb8f0;border-radius:2px;box-sizing:border-box"><svg width="13" height="12" viewBox="0 0 13 12" style="position:absolute;left:0;top:0"><path d="M8.3 2.7L4.2 6.5L8.3 10.3" fill="none" stroke="#000" stroke-width="1.2"/></svg></div>
</div>
<div id="dlg">
<div style="position:absolute;left:369px;top:48px;width:482px;height:352px;background:#ece9d8;border-radius:7px 7px 0 0"></div>
<div style="position:absolute;left:369px;top:48px;width:482px;height:29px;background:linear-gradient(#0058ee,#3593ff 4%,#288eff 6%,#127dff 8%,#036ffc 10%,#0262ee 14%,#0057e5 20%,#0054e3 24%,#0055eb 56%,#005bf5 66%,#026afe 76%,#0062ef 86%,#0052d6 92%,#0046c6 100%);border-radius:7px 7px 0 0"></div>
<div style="position:absolute;left:369px;top:77px;width:3px;height:323px;background:linear-gradient(90deg,#0831d9 0 1px,#166aee 1px 2px,#0855dd 2px)"></div>
<div style="position:absolute;left:848px;top:77px;width:3px;height:323px;background:linear-gradient(90deg,#0f55e2 0 1px,#0029b7 1px 2px,#00138c 2px)"></div>
<div style="position:absolute;left:369px;top:397px;width:482px;height:3px;background:linear-gradient(#0f55e2 0 1px,#0029b7 1px 2px,#00138c 2px)"></div>
<div style="position:absolute;left:369px;top:48px;width:482px;height:29px;background:linear-gradient(90deg,rgba(255,255,255,.12) 0,transparent 1%,transparent 78%,rgba(0,25,150,.45) 100%);border-radius:7px 7px 0 0"></div>
<span class="t" style="left:375.72px;top:57px;font-size:13.5px;line-height:15px;color:#fff;transform:scaleX(0.932);font-weight:bold;text-shadow:1px 1px 0 #0a1883;">Auto Spacing</span>
<div style="position:absolute;left:387px;top:96px;width:155px;height:296px;border:1px solid #d0d0bf;border-radius:4px;box-sizing:border-box;"></div>
<div style="position:absolute;left:549px;top:96px;width:198px;height:131px;border:1px solid #d0d0bf;border-radius:4px;box-sizing:border-box;"></div>
<div style="position:absolute;left:394px;top:90px;width:56px;height:14px;background:#ece9d8"></div>
<div style="position:absolute;left:556px;top:90px;width:74px;height:14px;background:#ece9d8"></div>
<span class="t" style="left:396.07px;top:90px;font-size:12px;line-height:14px;color:#0046d5;transform:scaleX(0.865);">Stitch (mm)</span>
<span class="t" style="left:558.05px;top:90px;font-size:12px;line-height:14px;color:#0046d5;transform:scaleX(0.892);">Spacing Offset</span>
<span class="t" style="left:411.63px;top:114px;font-size:12px;line-height:14px;color:#000;transform:scaleX(0.914);">Length:</span>
<span class="t" style="left:480.15px;top:114px;font-size:12px;line-height:14px;color:#000;transform:scaleX(0.901);">Spacing:</span>
<span class="t" style="left:558.77px;top:113px;font-size:12px;line-height:14px;color:#000;transform:scaleX(0.905);">Thread Type A:</span>
<span class="t" style="left:660.03px;top:113px;font-size:12px;line-height:14px;color:#000;transform:scaleX(0.894);">Thread Type B:</span>
<span class="t" style="left:558.98px;top:171px;font-size:12px;line-height:14px;color:#000;transform:scaleX(0.885);">Thread Type C:</span>
<span class="t" style="left:659.97px;top:171px;font-size:12px;line-height:14px;color:#000;transform:scaleX(0.901);">Thread Type D:</span>
<span class="t" style="left:624.13px;top:139px;font-size:12px;line-height:14px;color:#000;transform:scaleX(0.824);">mm</span>
<span class="t" style="left:722.87px;top:140px;font-size:12px;line-height:14px;color:#000;transform:scaleX(0.838);">mm</span>
<span class="t" style="left:624.07px;top:197px;font-size:12px;line-height:14px;color:#000;transform:scaleX(0.838);">mm</span>
<span class="t" style="left:723.17px;top:197px;font-size:12px;line-height:14px;color:#000;transform:scaleX(0.843);">mm</span>
<div style="position:absolute;left:402px;top:136px;width:60px;height:20px;background:#fff;border:1px solid #7f9db9;box-sizing:border-box"></div>
<div style="position:absolute;left:445px;top:138px;width:15px;height:16px;background:linear-gradient(#c9d8fc,#b4c6f0);border-radius:2px"><svg width="15" height="16" viewBox="0 0 15 16" style="position:absolute;left:0;top:0"><path d="M4.4 6.2L7.5 3.4L10.6 6.2M4.4 10.3L7.5 13.1L10.6 10.3" fill="none" stroke="#4d6185" stroke-width="2"/></svg></div>
<div style="position:absolute;left:405px;top:139px;width:27px;height:13px;background:#316ac5"></div>
<div style="position:absolute;left:432px;top:139px;width:1px;height:13px;background:#000"></div>
<span class="t" style="left:410.99px;top:139px;font-size:12px;line-height:14px;color:#fff;transform:scaleX(0.900);">0.10</span>
<div style="position:absolute;left:470px;top:136px;width:60px;height:20px;background:#fff;border:1px solid #7f9db9;box-sizing:border-box"></div>
<div style="position:absolute;left:513px;top:138px;width:15px;height:16px;background:linear-gradient(#c9d8fc,#b4c6f0);border-radius:2px"><svg width="15" height="16" viewBox="0 0 15 16" style="position:absolute;left:0;top:0"><path d="M4.4 6.2L7.5 3.4L10.6 6.2M4.4 10.3L7.5 13.1L10.6 10.3" fill="none" stroke="#4d6185" stroke-width="2"/></svg></div>
<span class="t" style="left:478.99px;top:139px;font-size:12px;line-height:14px;color:#000;transform:scaleX(0.900);">0.54</span>
<div style="position:absolute;left:402px;top:158px;width:60px;height:20px;background:#fff;border:1px solid #7f9db9;box-sizing:border-box"></div>
<div style="position:absolute;left:445px;top:160px;width:15px;height:16px;background:linear-gradient(#c9d8fc,#b4c6f0);border-radius:2px"><svg width="15" height="16" viewBox="0 0 15 16" style="position:absolute;left:0;top:0"><path d="M4.4 6.2L7.5 3.4L10.6 6.2M4.4 10.3L7.5 13.1L10.6 10.3" fill="none" stroke="#4d6185" stroke-width="2"/></svg></div>
<span class="t" style="left:410.99px;top:161px;font-size:12px;line-height:14px;color:#000;transform:scaleX(0.900);">0.50</span>
<div style="position:absolute;left:470px;top:158px;width:60px;height:20px;background:#fff;border:1px solid #7f9db9;box-sizing:border-box"></div>
<div style="position:absolute;left:513px;top:160px;width:15px;height:16px;background:linear-gradient(#c9d8fc,#b4c6f0);border-radius:2px"><svg width="15" height="16" viewBox="0 0 15 16" style="position:absolute;left:0;top:0"><path d="M4.4 6.2L7.5 3.4L10.6 6.2M4.4 10.3L7.5 13.1L10.6 10.3" fill="none" stroke="#4d6185" stroke-width="2"/></svg></div>
<span class="t" style="left:478.99px;top:161px;font-size:12px;line-height:14px;color:#000;transform:scaleX(0.900);">0.51</span>
<div style="position:absolute;left:402px;top:181px;width:60px;height:20px;background:#fff;border:1px solid #7f9db9;box-sizing:border-box"></div>
<div style="position:absolute;left:445px;top:183px;width:15px;height:16px;background:linear-gradient(#c9d8fc,#b4c6f0);border-radius:2px"><svg width="15" height="16" viewBox="0 0 15 16" style="position:absolute;left:0;top:0"><path d="M4.4 6.2L7.5 3.4L10.6 6.2M4.4 10.3L7.5 13.1L10.6 10.3" fill="none" stroke="#4d6185" stroke-width="2"/></svg></div>
<span class="t" style="left:410.99px;top:184px;font-size:12px;line-height:14px;color:#000;transform:scaleX(0.900);">1.00</span>
<div style="position:absolute;left:470px;top:181px;width:60px;height:20px;background:#fff;border:1px solid #7f9db9;box-sizing:border-box"></div>
<div style="position:absolute;left:513px;top:183px;width:15px;height:16px;background:linear-gradient(#c9d8fc,#b4c6f0);border-radius:2px"><svg width="15" height="16" viewBox="0 0 15 16" style="position:absolute;left:0;top:0"><path d="M4.4 6.2L7.5 3.4L10.6 6.2M4.4 10.3L7.5 13.1L10.6 10.3" fill="none" stroke="#4d6185" stroke-width="2"/></svg></div>
<span class="t" style="left:478.99px;top:184px;font-size:12px;line-height:14px;color:#000;transform:scaleX(0.900);">0.49</span>
<div style="position:absolute;left:402px;top:204px;width:60px;height:20px;background:#fff;border:1px solid #7f9db9;box-sizing:border-box"></div>
<div style="position:absolute;left:445px;top:206px;width:15px;height:16px;background:linear-gradient(#c9d8fc,#b4c6f0);border-radius:2px"><svg width="15" height="16" viewBox="0 0 15 16" style="position:absolute;left:0;top:0"><path d="M4.4 6.2L7.5 3.4L10.6 6.2M4.4 10.3L7.5 13.1L10.6 10.3" fill="none" stroke="#4d6185" stroke-width="2"/></svg></div>
<span class="t" style="left:410.99px;top:207px;font-size:12px;line-height:14px;color:#000;transform:scaleX(0.900);">1.50</span>
<div style="position:absolute;left:470px;top:204px;width:60px;height:20px;background:#fff;border:1px solid #7f9db9;box-sizing:border-box"></div>
<div style="position:absolute;left:513px;top:206px;width:15px;height:16px;background:linear-gradient(#c9d8fc,#b4c6f0);border-radius:2px"><svg width="15" height="16" viewBox="0 0 15 16" style="position:absolute;left:0;top:0"><path d="M4.4 6.2L7.5 3.4L10.6 6.2M4.4 10.3L7.5 13.1L10.6 10.3" fill="none" stroke="#4d6185" stroke-width="2"/></svg></div>
<span class="t" style="left:478.99px;top:207px;font-size:12px;line-height:14px;color:#000;transform:scaleX(0.900);">0.47</span>
<div style="position:absolute;left:402px;top:227px;width:60px;height:20px;background:#fff;border:1px solid #7f9db9;box-sizing:border-box"></div>
<div style="position:absolute;left:445px;top:229px;width:15px;height:16px;background:linear-gradient(#c9d8fc,#b4c6f0);border-radius:2px"><svg width="15" height="16" viewBox="0 0 15 16" style="position:absolute;left:0;top:0"><path d="M4.4 6.2L7.5 3.4L10.6 6.2M4.4 10.3L7.5 13.1L10.6 10.3" fill="none" stroke="#4d6185" stroke-width="2"/></svg></div>
<span class="t" style="left:410.99px;top:230px;font-size:12px;line-height:14px;color:#000;transform:scaleX(0.900);">2.00</span>
<div style="position:absolute;left:470px;top:227px;width:60px;height:20px;background:#fff;border:1px solid #7f9db9;box-sizing:border-box"></div>
<div style="position:absolute;left:513px;top:229px;width:15px;height:16px;background:linear-gradient(#c9d8fc,#b4c6f0);border-radius:2px"><svg width="15" height="16" viewBox="0 0 15 16" style="position:absolute;left:0;top:0"><path d="M4.4 6.2L7.5 3.4L10.6 6.2M4.4 10.3L7.5 13.1L10.6 10.3" fill="none" stroke="#4d6185" stroke-width="2"/></svg></div>
<span class="t" style="left:478.99px;top:230px;font-size:12px;line-height:14px;color:#000;transform:scaleX(0.900);">0.46</span>
<div style="position:absolute;left:402px;top:250px;width:60px;height:20px;background:#fff;border:1px solid #7f9db9;box-sizing:border-box"></div>
<div style="position:absolute;left:445px;top:252px;width:15px;height:16px;background:linear-gradient(#c9d8fc,#b4c6f0);border-radius:2px"><svg width="15" height="16" viewBox="0 0 15 16" style="position:absolute;left:0;top:0"><path d="M4.4 6.2L7.5 3.4L10.6 6.2M4.4 10.3L7.5 13.1L10.6 10.3" fill="none" stroke="#4d6185" stroke-width="2"/></svg></div>
<span class="t" style="left:410.99px;top:253px;font-size:12px;line-height:14px;color:#000;transform:scaleX(0.900);">3.00</span>
<div style="position:absolute;left:470px;top:250px;width:60px;height:20px;background:#fff;border:1px solid #7f9db9;box-sizing:border-box"></div>
<div style="position:absolute;left:513px;top:252px;width:15px;height:16px;background:linear-gradient(#c9d8fc,#b4c6f0);border-radius:2px"><svg width="15" height="16" viewBox="0 0 15 16" style="position:absolute;left:0;top:0"><path d="M4.4 6.2L7.5 3.4L10.6 6.2M4.4 10.3L7.5 13.1L10.6 10.3" fill="none" stroke="#4d6185" stroke-width="2"/></svg></div>
<span class="t" style="left:478.99px;top:253px;font-size:12px;line-height:14px;color:#000;transform:scaleX(0.900);">0.42</span>
<div style="position:absolute;left:402px;top:272px;width:60px;height:20px;background:#fff;border:1px solid #7f9db9;box-sizing:border-box"></div>
<div style="position:absolute;left:445px;top:274px;width:15px;height:16px;background:linear-gradient(#c9d8fc,#b4c6f0);border-radius:2px"><svg width="15" height="16" viewBox="0 0 15 16" style="position:absolute;left:0;top:0"><path d="M4.4 6.2L7.5 3.4L10.6 6.2M4.4 10.3L7.5 13.1L10.6 10.3" fill="none" stroke="#4d6185" stroke-width="2"/></svg></div>
<span class="t" style="left:410.99px;top:275px;font-size:12px;line-height:14px;color:#000;transform:scaleX(0.900);">4.00</span>
<div style="position:absolute;left:470px;top:272px;width:60px;height:20px;background:#fff;border:1px solid #7f9db9;box-sizing:border-box"></div>
<div style="position:absolute;left:513px;top:274px;width:15px;height:16px;background:linear-gradient(#c9d8fc,#b4c6f0);border-radius:2px"><svg width="15" height="16" viewBox="0 0 15 16" style="position:absolute;left:0;top:0"><path d="M4.4 6.2L7.5 3.4L10.6 6.2M4.4 10.3L7.5 13.1L10.6 10.3" fill="none" stroke="#4d6185" stroke-width="2"/></svg></div>
<span class="t" style="left:478.99px;top:275px;font-size:12px;line-height:14px;color:#000;transform:scaleX(0.900);">0.40</span>
<div style="position:absolute;left:402px;top:295px;width:60px;height:20px;background:#fff;border:1px solid #7f9db9;box-sizing:border-box"></div>
<div style="position:absolute;left:445px;top:297px;width:15px;height:16px;background:linear-gradient(#c9d8fc,#b4c6f0);border-radius:2px"><svg width="15" height="16" viewBox="0 0 15 16" style="position:absolute;left:0;top:0"><path d="M4.4 6.2L7.5 3.4L10.6 6.2M4.4 10.3L7.5 13.1L10.6 10.3" fill="none" stroke="#4d6185" stroke-width="2"/></svg></div>
<span class="t" style="left:410.99px;top:298px;font-size:12px;line-height:14px;color:#000;transform:scaleX(0.900);">5.00</span>
<div style="position:absolute;left:470px;top:295px;width:60px;height:20px;background:#fff;border:1px solid #7f9db9;box-sizing:border-box"></div>
<div style="position:absolute;left:513px;top:297px;width:15px;height:16px;background:linear-gradient(#c9d8fc,#b4c6f0);border-radius:2px"><svg width="15" height="16" viewBox="0 0 15 16" style="position:absolute;left:0;top:0"><path d="M4.4 6.2L7.5 3.4L10.6 6.2M4.4 10.3L7.5 13.1L10.6 10.3" fill="none" stroke="#4d6185" stroke-width="2"/></svg></div>
<span class="t" style="left:478.99px;top:298px;font-size:12px;line-height:14px;color:#000;transform:scaleX(0.900);">0.37</span>
<div style="position:absolute;left:402px;top:318px;width:60px;height:20px;background:#fff;border:1px solid #7f9db9;box-sizing:border-box"></div>
<div style="position:absolute;left:445px;top:320px;width:15px;height:16px;background:linear-gradient(#c9d8fc,#b4c6f0);border-radius:2px"><svg width="15" height="16" viewBox="0 0 15 16" style="position:absolute;left:0;top:0"><path d="M4.4 6.2L7.5 3.4L10.6 6.2M4.4 10.3L7.5 13.1L10.6 10.3" fill="none" stroke="#4d6185" stroke-width="2"/></svg></div>
<span class="t" style="left:410.99px;top:321px;font-size:12px;line-height:14px;color:#000;transform:scaleX(0.900);">6.00</span>
<div style="position:absolute;left:470px;top:318px;width:60px;height:20px;background:#fff;border:1px solid #7f9db9;box-sizing:border-box"></div>
<div style="position:absolute;left:513px;top:320px;width:15px;height:16px;background:linear-gradient(#c9d8fc,#b4c6f0);border-radius:2px"><svg width="15" height="16" viewBox="0 0 15 16" style="position:absolute;left:0;top:0"><path d="M4.4 6.2L7.5 3.4L10.6 6.2M4.4 10.3L7.5 13.1L10.6 10.3" fill="none" stroke="#4d6185" stroke-width="2"/></svg></div>
<span class="t" style="left:478.99px;top:321px;font-size:12px;line-height:14px;color:#000;transform:scaleX(0.900);">0.36</span>
<div style="position:absolute;left:402px;top:340px;width:60px;height:20px;background:#fff;border:1px solid #7f9db9;box-sizing:border-box"></div>
<div style="position:absolute;left:445px;top:342px;width:15px;height:16px;background:linear-gradient(#c9d8fc,#b4c6f0);border-radius:2px"><svg width="15" height="16" viewBox="0 0 15 16" style="position:absolute;left:0;top:0"><path d="M4.4 6.2L7.5 3.4L10.6 6.2M4.4 10.3L7.5 13.1L10.6 10.3" fill="none" stroke="#4d6185" stroke-width="2"/></svg></div>
<span class="t" style="left:410.99px;top:343px;font-size:12px;line-height:14px;color:#000;transform:scaleX(0.900);">7.00</span>
<div style="position:absolute;left:470px;top:340px;width:60px;height:20px;background:#fff;border:1px solid #7f9db9;box-sizing:border-box"></div>
<div style="position:absolute;left:513px;top:342px;width:15px;height:16px;background:linear-gradient(#c9d8fc,#b4c6f0);border-radius:2px"><svg width="15" height="16" viewBox="0 0 15 16" style="position:absolute;left:0;top:0"><path d="M4.4 6.2L7.5 3.4L10.6 6.2M4.4 10.3L7.5 13.1L10.6 10.3" fill="none" stroke="#4d6185" stroke-width="2"/></svg></div>
<span class="t" style="left:478.99px;top:343px;font-size:12px;line-height:14px;color:#000;transform:scaleX(0.900);">0.34</span>
<div style="position:absolute;left:402px;top:363px;width:60px;height:20px;background:#fff;border:1px solid #7f9db9;box-sizing:border-box"></div>
<div style="position:absolute;left:445px;top:365px;width:15px;height:16px;background:linear-gradient(#c9d8fc,#b4c6f0);border-radius:2px"><svg width="15" height="16" viewBox="0 0 15 16" style="position:absolute;left:0;top:0"><path d="M4.4 6.2L7.5 3.4L10.6 6.2M4.4 10.3L7.5 13.1L10.6 10.3" fill="none" stroke="#4d6185" stroke-width="2"/></svg></div>
<span class="t" style="left:410.99px;top:366px;font-size:12px;line-height:14px;color:#000;transform:scaleX(0.900);">8.00</span>
<div style="position:absolute;left:470px;top:363px;width:60px;height:20px;background:#fff;border:1px solid #7f9db9;box-sizing:border-box"></div>
<div style="position:absolute;left:513px;top:365px;width:15px;height:16px;background:linear-gradient(#c9d8fc,#b4c6f0);border-radius:2px"><svg width="15" height="16" viewBox="0 0 15 16" style="position:absolute;left:0;top:0"><path d="M4.4 6.2L7.5 3.4L10.6 6.2M4.4 10.3L7.5 13.1L10.6 10.3" fill="none" stroke="#4d6185" stroke-width="2"/></svg></div>
<span class="t" style="left:478.99px;top:366px;font-size:12px;line-height:14px;color:#000;transform:scaleX(0.900);">0.34</span>
<div style="position:absolute;left:558px;top:136px;width:60px;height:20px;background:#fff;border:1px solid #7f9db9;box-sizing:border-box"></div>
<div style="position:absolute;left:601px;top:138px;width:15px;height:16px;background:linear-gradient(#c9d8fc,#b4c6f0);border-radius:2px"><svg width="15" height="16" viewBox="0 0 15 16" style="position:absolute;left:0;top:0"><path d="M4.4 6.2L7.5 3.4L10.6 6.2M4.4 10.3L7.5 13.1L10.6 10.3" fill="none" stroke="#4d6185" stroke-width="2"/></svg></div>
<span class="t" style="left:566.99px;top:139px;font-size:12px;line-height:14px;color:#000;transform:scaleX(0.900);">0.01</span>
<div style="position:absolute;left:660px;top:137px;width:60px;height:20px;background:#fff;border:1px solid #7f9db9;box-sizing:border-box"></div>
<div style="position:absolute;left:703px;top:139px;width:15px;height:16px;background:linear-gradient(#c9d8fc,#b4c6f0);border-radius:2px"><svg width="15" height="16" viewBox="0 0 15 16" style="position:absolute;left:0;top:0"><path d="M4.4 6.2L7.5 3.4L10.6 6.2M4.4 10.3L7.5 13.1L10.6 10.3" fill="none" stroke="#4d6185" stroke-width="2"/></svg></div>
<span class="t" style="left:668.99px;top:140px;font-size:12px;line-height:14px;color:#000;transform:scaleX(0.900);">0.03</span>
<div style="position:absolute;left:558px;top:194px;width:60px;height:20px;background:#fff;border:1px solid #7f9db9;box-sizing:border-box"></div>
<div style="position:absolute;left:601px;top:196px;width:15px;height:16px;background:linear-gradient(#c9d8fc,#b4c6f0);border-radius:2px"><svg width="15" height="16" viewBox="0 0 15 16" style="position:absolute;left:0;top:0"><path d="M4.4 6.2L7.5 3.4L10.6 6.2M4.4 10.3L7.5 13.1L10.6 10.3" fill="none" stroke="#4d6185" stroke-width="2"/></svg></div>
<span class="t" style="left:565.19px;top:197px;font-size:12px;line-height:14px;color:#000;transform:scaleX(0.900);">-0.03</span>
<div style="position:absolute;left:660px;top:194px;width:60px;height:20px;background:#fff;border:1px solid #7f9db9;box-sizing:border-box"></div>
<div style="position:absolute;left:703px;top:196px;width:15px;height:16px;background:linear-gradient(#c9d8fc,#b4c6f0);border-radius:2px"><svg width="15" height="16" viewBox="0 0 15 16" style="position:absolute;left:0;top:0"><path d="M4.4 6.2L7.5 3.4L10.6 6.2M4.4 10.3L7.5 13.1L10.6 10.3" fill="none" stroke="#4d6185" stroke-width="2"/></svg></div>
<span class="t" style="left:667.19px;top:197px;font-size:12px;line-height:14px;color:#000;transform:scaleX(0.900);">-0.06</span>
<div style="position:absolute;left:765px;top:98px;width:73px;height:21px;background:#003c74;border-radius:3px"></div>
<div style="position:absolute;left:766px;top:99px;width:71px;height:19px;background:linear-gradient(#fff,#f6f5f0 60%,#eceadf);border:2px solid;border-color:#cbdcfb #a4bdf0 #6a8fe4 #a4bdf0;border-radius:2px;box-sizing:border-box"></div>
<div style="position:absolute;left:765px;top:124px;width:73px;height:21px;background:linear-gradient(#fff,#f4f3ee 60%,#dcd9c9);border:1px solid #003c74;border-radius:3px;box-sizing:border-box"></div>
<div style="position:absolute;left:765px;top:150px;width:73px;height:21px;background:#f5f4ea;border:1px solid #c9c7ba;border-radius:3px;box-sizing:border-box"></div>
<span class="t" style="left:794.12px;top:102px;font-size:12px;line-height:14px;color:#000;transform:scaleX(0.877);">OK</span>
<span class="t" style="left:784.95px;top:128px;font-size:12px;line-height:14px;color:#000;transform:scaleX(0.914);">Cancel</span>
<span class="t" style="left:786.90px;top:154px;font-size:12px;line-height:14px;color:#aca899;transform:scaleX(0.899);">Reset</span>
</div>
</body></html>
